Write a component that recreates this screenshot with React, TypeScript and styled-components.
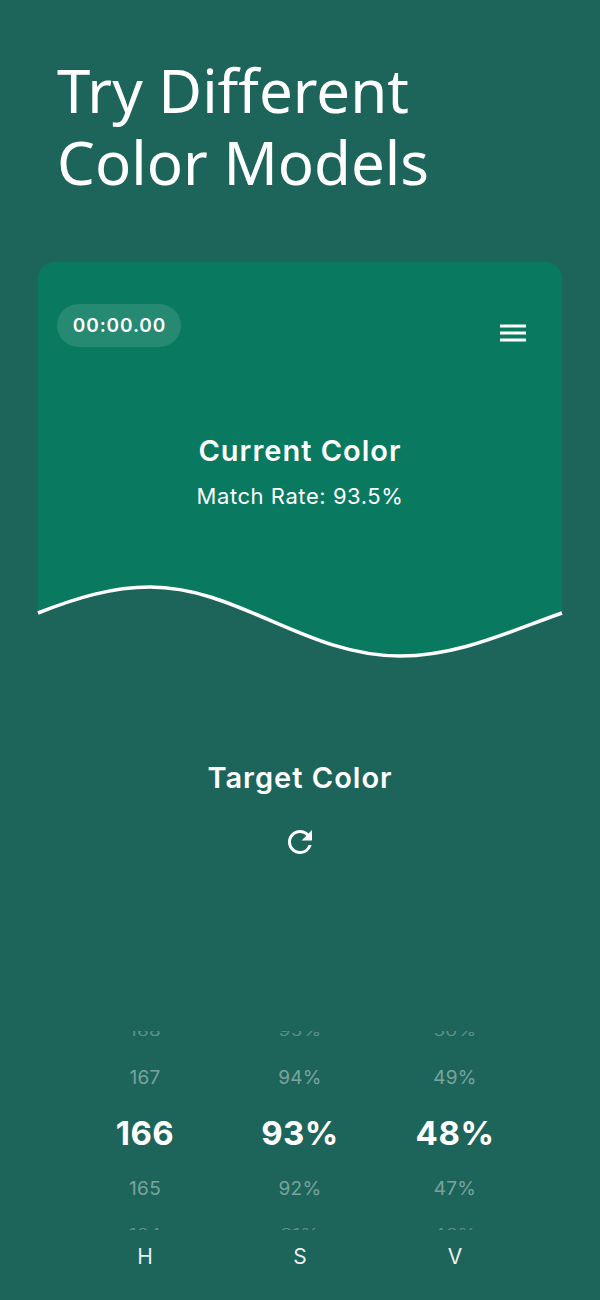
import React from "react";
import styled, { createGlobalStyle } from "styled-components";
import { MdRefresh } from "react-icons/md";

const Global = createGlobalStyle`
  html, body { margin: 0; padding: 0; background: #1d655a; }
  * { box-sizing: border-box; }
`;

const Page = styled.main`
  width: 600px;
  height: 1300px;
  overflow: hidden;
  background: #1d655a;
  color: #fff;
  font-family: Inter, "Liberation Sans", sans-serif;
  display: flex;
  flex-direction: column;
  align-items: center;
`;

const Title = styled.h1`
  align-self: stretch;
  margin: 54px 0 0;
  padding-left: 57px;
  height: 208px;
  font-family: "Noto Sans", sans-serif;
  font-weight: 400;
  font-size: 60px;
  line-height: 72px;
`;

const Card = styled.section`
  width: 524px;
  display: flex;
  flex-direction: column;
`;

const CardBody = styled.div`
  height: 320px;
  background: #09795f;
  border-radius: 16px 16px 0 0;
  padding: 42px 36px 0 19px;
  display: flex;
  flex-direction: column;
`;

const TopRow = styled.div`
  display: flex;
  justify-content: space-between;
`;

const Timer = styled.div`
  width: 124px;
  height: 43px;
  border-radius: 22px;
  background: rgba(255, 255, 255, 0.12);
  display: flex;
  align-items: center;
  justify-content: center;
  font-size: 19px;
  font-weight: 600;
  letter-spacing: 0.9px;
  padding-left: 1px;
`;

const MenuButton = styled.svg`
  width: 26px;
  height: 20px;
  margin-top: 19px;
`;

const CardHeading = styled.h2`
  text-align: center;
  font-size: 29px;
  line-height: 34px;
  font-weight: 600;
  letter-spacing: 1px;
  margin: 87px -36px 0 -19px;
`;

const MatchRate = styled.p`
  margin: 15px -36px 0 -19px;
  text-align: center;
  font-size: 22px;
  line-height: 26px;
  font-weight: 400;
  letter-spacing: 0.55px;
`;

const Wave = styled.svg`
  display: block;
  width: 524px;
  height: 80px;
  overflow: visible;
`;

const TargetHeading = styled.h2`
  margin: 99px 0 0;
  font-size: 29px;
  line-height: 34px;
  font-weight: 600;
  letter-spacing: 1px;
`;

const RefreshButton = styled.div`
  margin-top: 29px;
  width: 36px;
  height: 36px;
  display: flex;
  font-size: 36px;
`;

const Pickers = styled.div`
  margin-top: 171px;
  display: grid;
  grid-template-columns: repeat(3, 155px);
`;

const PickerColumn = styled.div`
  display: flex;
  flex-direction: column;
  align-items: center;
`;

const Wheel = styled.div`
  height: 199px;
  width: 100%;
  overflow: hidden;
  display: flex;
  flex-direction: column;
  align-items: center;
  justify-content: center;
`;

const WheelItem = styled.div<{ $step: number }>`
  flex: 0 0 55.5px;
  display: flex;
  align-items: center;
  justify-content: center;
  font-size: ${(p) => (p.$step === 0 ? "33px" : "19px")};
  font-weight: ${(p) => (p.$step === 0 ? 700 : 400)};
  letter-spacing: ${(p) => (p.$step === 0 ? "0.5px" : "0.3px")};
  color: ${(p) =>
    p.$step === 0
      ? "#fff"
      : Math.abs(p.$step) === 1
      ? "rgba(255,255,255,0.42)"
      : "rgba(255,255,255,0.3)"};
  transform: ${(p) =>
    Math.abs(p.$step) === 2
      ? `translateY(${p.$step < 0 ? 12 : -8}px) scaleY(0.7)`
      : `translateY(${p.$step === 0 ? 1.5 : 2}px)`};
`;

const PickerLabel = styled.div`
  margin-top: 14px;
  font-size: 21px;
  line-height: 26px;
  color: rgba(255, 255, 255, 0.92);
`;

const columns = [
  { label: "H", values: ["168", "167", "166", "165", "164"] },
  { label: "S", values: ["95%", "94%", "93%", "92%", "91%"] },
  { label: "V", values: ["50%", "49%", "48%", "47%", "46%"] },
];

export default function App() {
  return (
    <Page>
      <Global />
      <Title>
        Try Different
        <br />
        Color Models
      </Title>
      <Card>
        <CardBody>
          <TopRow>
            <Timer>00:00.00</Timer>
            <MenuButton viewBox="0 0 26 20" aria-label="menu">
              <path d="M0 3h26M0 10h26M0 17h26" stroke="#fff" strokeWidth="3" fill="none" />
            </MenuButton>
          </TopRow>
          <CardHeading>Current Color</CardHeading>
          <MatchRate>Match Rate: 93.5%</MatchRate>
        </CardBody>
        <Wave viewBox="0 0 524 80">
          <path
            d="M0 31 C 38 16 74 5 112 5 C 200 5 268 74 362 74 C 420 74 470 50 524 31 L524 0 L0 0 Z"
            fill="#09795f"
          />
          <path
            d="M0 31 C 38 16 74 5 112 5 C 200 5 268 74 362 74 C 420 74 470 50 524 31"
            fill="none"
            stroke="#fff"
            strokeWidth="3.5"
          />
        </Wave>
      </Card>
      <TargetHeading>Target Color</TargetHeading>
      <RefreshButton>
        <MdRefresh />
      </RefreshButton>
      <Pickers>
        {columns.map((c) => (
          <PickerColumn key={c.label}>
            <Wheel>
              {c.values.map((v, i) => (
                <WheelItem key={v} $step={i - 2}>
                  {v}
                </WheelItem>
              ))}
            </Wheel>
            <PickerLabel>{c.label}</PickerLabel>
          </PickerColumn>
        ))}
      </Pickers>
    </Page>
  );
}
